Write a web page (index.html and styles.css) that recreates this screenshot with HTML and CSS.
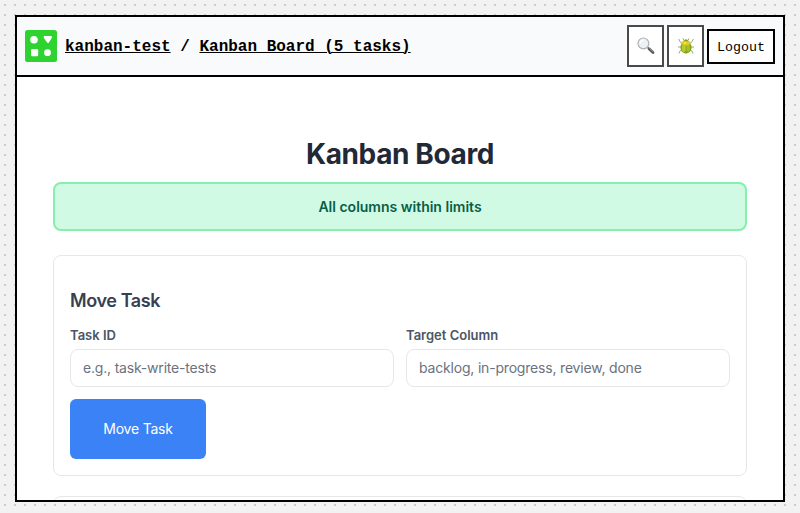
FILE: index.html
```html
<!DOCTYPE html>
<html lang="en">
<head>
<meta charset="utf-8">
<title>Kanban Board</title>
<link rel="stylesheet" href="styles.css">
</head>
<body>
<div class="window">
  <header class="topbar">
    <svg class="logo" viewBox="0 0 32 32">
      <rect width="32" height="32" rx="2.5" fill="#2fd32f"/>
      <g fill="#fff"><circle cx="9" cy="9.7" r="3.8"/><path d="M18.8 6h8v2L23.5 13h-1L18.8 8z"/><rect x="6" y="19" width="7.2" height="7.2" rx="1.2"/><circle cx="22.5" cy="22.7" r="3.4"/></g>
    </svg>
    <nav class="crumbs"><a>kanban-test</a><span class="slash">/</span><a>Kanban Board (5 tasks)</a></nav>
    <div class="actions">
      <button class="icon-btn" aria-label="Search">
        <svg width="18" height="18" viewBox="0 0 18 18">
          <path d="M10.5 10.2l2 1.9" stroke="#888" stroke-width="1.4"/>
          <path d="M12 11.8l4 3.8" stroke="#5b5b5b" stroke-width="2.8" stroke-linecap="round"/>
          <path d="M12.2 11.3l3.9 3.6" stroke="#999" stroke-width=".7"/>
          <circle cx="6.4" cy="6.4" r="5.4" fill="#edf1f3" stroke="#b0b0b0" stroke-width="1.2"/>
          <path d="M3.3 6.3a3.3 3.3 0 0 1 3-3" fill="none" stroke="#fff" stroke-width="1.2"/>
        </svg>
      </button>
      <button class="icon-btn" aria-label="Report bug">
        <svg width="18" height="18" viewBox="0 0 18 18">
          <g fill="none" stroke="#9aad68" stroke-width="1"><path d="M5.5 6.5L3 4.8 1.7 2M12.5 6.5L15 4.8 16.3 2M4 10H1M14 10h3M5 13l-2.2 1.2L2 16.5M13 13l2.2 1.2.8 2.3M7 3.5L6 1.4M11 3.5l1-2.1"/></g>
          <ellipse cx="9" cy="10.6" rx="5.6" ry="6" fill="#7fa51f"/>
          <ellipse cx="7.2" cy="11" rx="2.4" ry="4" fill="#b8cb2a"/>
          <ellipse cx="11.1" cy="11" rx="1.9" ry="3.8" fill="#a6c02c"/>
          <path d="M9 7v9.2" stroke="#7c9a20" stroke-width=".6"/>
          <ellipse cx="9" cy="6" rx="4.1" ry="2.4" fill="#e6cb22"/>
          <path d="M6.4 4.2Q9 .5 11.6 4.2z" fill="#849e19"/>
          <circle cx="8" cy="5.7" r="1" fill="#ffe650"/>
        </svg>
      </button>
      <button class="logout">Logout</button>
    </div>
  </header>
  <main class="content">
    <h1>Kanban Board</h1>
    <div class="status">All columns within limits</div>
    <section class="card">
      <h2>Move Task</h2>
      <div class="fields">
        <label>Task ID<input placeholder="e.g., task-write-tests"></label>
        <label>Target Column<input placeholder="backlog, in-progress, review, done"></label>
      </div>
      <button class="move">Move Task</button>
    </section>
    <section class="card"></section>
  </main>
</div>
</body>
</html>
```
FILE: styles.css
```css
* { box-sizing: border-box; }
body {
  margin: 0;
  height: 513px;
  padding: 15px 15px 11px;
  overflow: hidden;
  font-family: Inter, sans-serif;
  background-color: #f2f2f2;
  background-image: linear-gradient(90deg, transparent 2px, #f2f2f2 2px), linear-gradient(#ccc 2px, #f2f2f2 2px);
  background-size: 10px 10px;
  background-position: 4px 4px;
}
.window {
  height: 487px;
  border: 2px solid #000;
  background: #fff;
  overflow: hidden;
}
.topbar {
  display: flex;
  align-items: center;
  height: 60px;
  padding: 0 8px;
  background: #f9fafc;
  border-bottom: 2px solid #000;
}
.logo { width: 32px; height: 32px; margin-right: 8px; }
.crumbs {
  padding-top: 2px;
  font: bold 16px/20px "Liberation Mono", monospace;
  color: #000;
}
.crumbs a { text-decoration: underline; text-decoration-thickness: 1px; text-underline-offset: 1px; }
.slash { margin: 0 9.6px; }
.actions { display: flex; align-items: center; gap: 3px; margin-left: auto; }
.icon-btn {
  display: flex;
  align-items: center;
  justify-content: center;
  width: 37px;
  height: 42px;
  padding: 0;
  border: 2px solid #4a4a4a;
  background: #fff;
}
.logout {
  width: 68px;
  height: 35px;
  padding: 2px 0 0;
  border: 2px solid #000;
  background: #fff;
  color: #000;
  font: 13.333px "Liberation Mono", monospace;
}
.content { padding: 60px 36px 0; }
h1 {
  margin: 0 0 11px;
  font-size: 28px;
  line-height: 34px;
  font-weight: 700;
  letter-spacing: -0.37px;
  text-align: center;
  color: #1f2937;
}
.status {
  height: 49px;
  margin-bottom: 24px;
  border: 2px solid #86efac;
  border-radius: 8px;
  background: #d1fae5;
  color: #065f46;
  font-size: 14px;
  font-weight: 600;
  line-height: 45px;
  text-align: center;
}
.card {
  height: 221px;
  margin-bottom: 20px;
  padding: 34px 16px 16px;
  border: 1px solid #e5e7eb;
  border-radius: 8px;
}
h2 {
  margin: 0 0 15px;
  font-size: 18px;
  line-height: 22px;
  font-weight: 600;
  letter-spacing: -0.4px;
  color: #374151;
}
.fields { display: grid; grid-template-columns: 1fr 1fr; gap: 12px; }
label {
  display: block;
  font-size: 13px;
  line-height: 16px;
  font-weight: 600;
  color: #4b5563;
}
input {
  display: block;
  width: 100%;
  height: 38px;
  margin-top: 6px;
  padding: 0 12px 2px;
  border: 1px solid #e5e7eb;
  border-radius: 8px;
  background: #fff;
  font: 14px Inter, sans-serif;
  letter-spacing: -0.19px;
}
input::placeholder { color: #6b7280; }
.move {
  display: block;
  width: 136px;
  height: 60px;
  margin-top: 12px;
  padding: 0 0 2px;
  border: 0;
  border-radius: 6px;
  background: #3b82f6;
  color: #fff;
  font: 14px Inter, sans-serif;
  letter-spacing: -0.2px;
}
```
